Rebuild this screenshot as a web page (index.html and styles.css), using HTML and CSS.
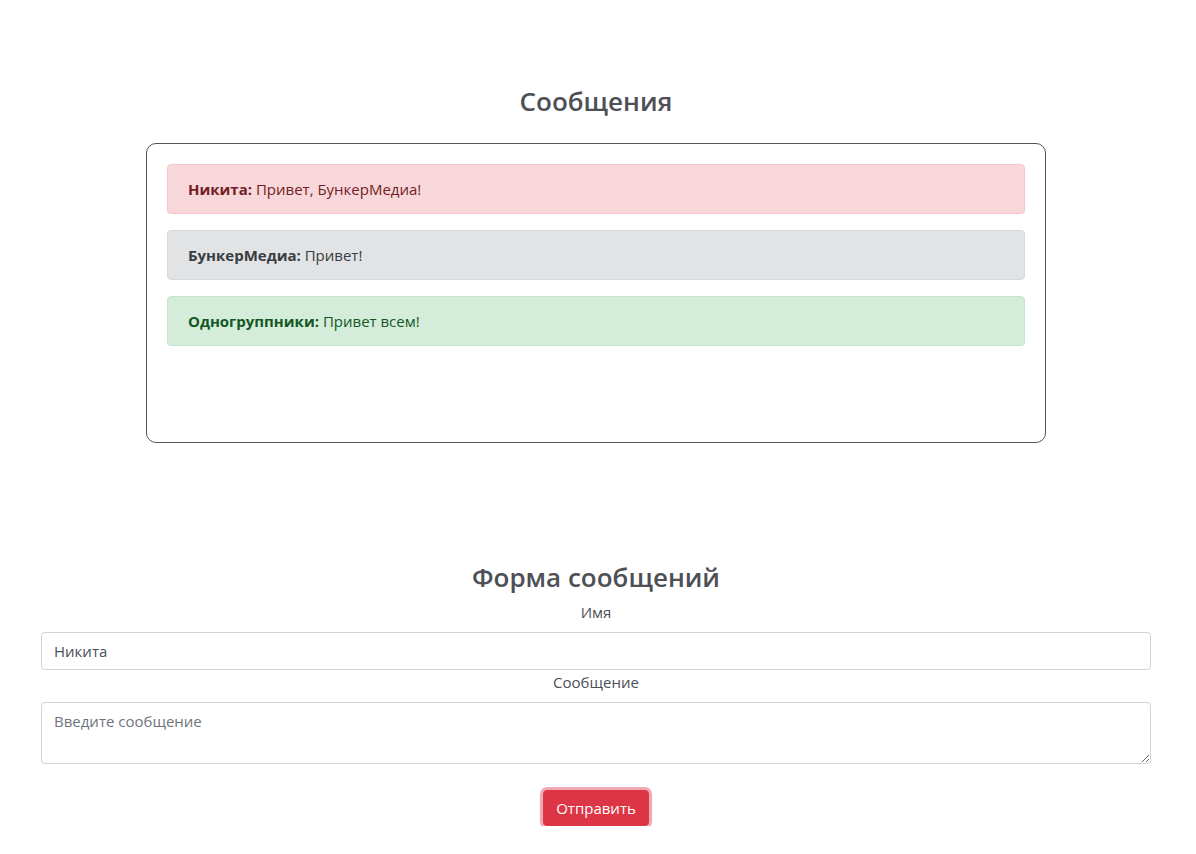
FILE: index.html
```html
<!DOCTYPE html>
<html lang="ru">
<head>
<meta charset="utf-8">
<title>Сообщения</title>
<link rel="stylesheet" href="styles.css">
</head>
<body>
<main class="page">
  <section class="messages">
    <h3 class="title">Сообщения</h3>
    <div class="chat">
      <div class="alert alert-danger"><b>Никита:</b> Привет, БункерМедиа!</div>
      <div class="alert alert-secondary"><b>БункерМедиа:</b> Привет!</div>
      <div class="alert alert-success"><b>Одногруппники:</b> Привет всем!</div>
    </div>
  </section>
  <form class="form">
    <h3 class="title form-title">Форма сообщений</h3>
    <label class="label" for="name">Имя</label>
    <input class="control" id="name" type="text" value="Никита">
    <label class="label" for="msg">Сообщение</label>
    <textarea class="control area" id="msg" rows="2" placeholder="Введите сообщение"></textarea>
    <div class="actions"><button type="button" class="btn">Отправить</button></div>
  </form>
</main>
</body>
</html>
```
FILE: styles.css
```css
* { box-sizing: border-box; }
html, body { margin: 0; background: #fff; }
body {
  font-family: "Open Sans", "Noto Sans", sans-serif;
  font-size: 15px;
  line-height: 24px;
  color: #495057;
  padding-right: 4px;
}
.page {
  width: 1110px;
  margin: 0 auto;
}
.messages {
  padding-top: 84px;
  display: flex;
  flex-direction: column;
  align-items: center;
}
.title {
  margin: 0 0 25px;
  font-size: 26px;
  line-height: 34px;
  font-weight: 600;
  color: #4d5055;
  text-align: center;
}
.chat {
  width: 900px;
  height: 300px;
  border: 1px solid #555;
  border-radius: 10px;
  padding: 20px;
}
.alert {
  padding: 12px 20px;
  border: 1px solid transparent;
  border-radius: 4px;
  margin-bottom: 16px;
}
.alert b { font-weight: 700; }
.alert-danger { background: #f8d7da; border-color: #f5c6cb; color: #721c24; }
.alert-secondary { background: #e2e3e5; border-color: #d6d8db; color: #383d41; }
.alert-success { background: #d4edda; border-color: #c3e6cb; color: #155724; }
.form {
  margin-top: 117px;
  display: flex;
  flex-direction: column;
}
.form-title { margin-bottom: 6px; }
.label {
  display: block;
  text-align: center;
  margin-bottom: 8px;
}
.control {
  display: block;
  width: 100%;
  font: inherit;
  color: #495057;
  padding: 6px 12px;
  border: 1px solid #ced4da;
  border-radius: 4px;
  background: #fff;
  height: 38px;
  margin: 0;
}
.control::placeholder { color: #6c757d; }
.area {
  height: 62px;
  resize: vertical;
}
.actions {
  display: flex;
  justify-content: center;
  margin-top: 26px;
}
.btn {
  font: inherit;
  color: #fff;
  background: #dc3545;
  border: 1px solid #dc3545;
  border-radius: 4px;
  padding: 5px 12px;
  height: 36px;
  box-shadow: 0 0 0 3px rgba(225, 83, 97, 0.5);
}
```
